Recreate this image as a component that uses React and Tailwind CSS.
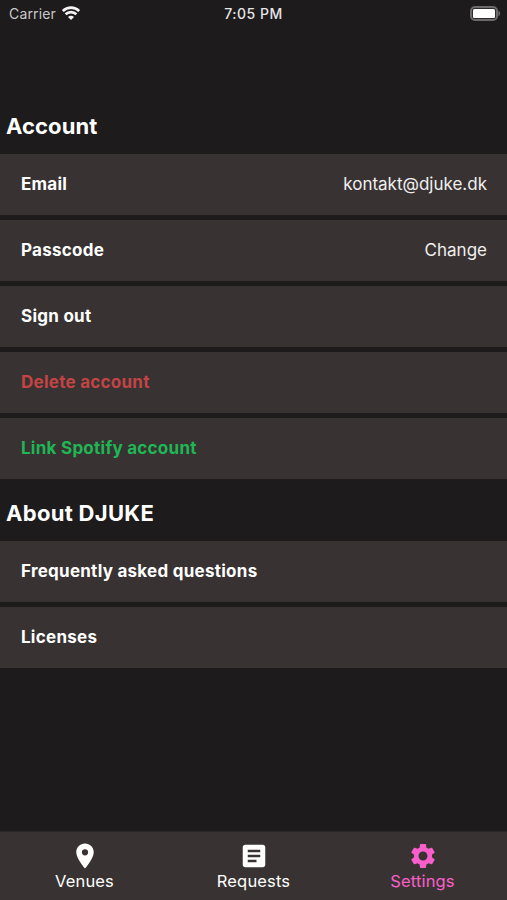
import React from 'react';
import { MdArticle, MdLocationOn, MdSettings } from 'react-icons/md';

const sections = [
  {
    title: 'Account',
    headerClass: 'h-[54px] pb-[3px]',
    titleClass: 'tracking-[0.1px]',
    rows: [
      { label: 'Email', value: 'kontakt@djuke.dk' },
      { label: 'Passcode', value: 'Change' },
      { label: 'Sign out' },
      { label: 'Delete account', color: 'text-[#c24444]' },
      { label: 'Link Spotify account', color: 'text-[#1fb655]' },
    ],
  },
  {
    title: 'About DJUKE',
    headerClass: 'h-[62px] pt-[6px]',
    titleClass: 'tracking-[0.3px]',
    rows: [
      { label: 'Frequently asked questions' },
      { label: 'Licenses' },
    ],
  },
];

const tabs = [
  { name: 'Venues', icon: MdLocationOn },
  { name: 'Requests', icon: MdArticle },
  { name: 'Settings', icon: MdSettings, active: true },
];

function StatusBar() {
  return (
    <div className="grid h-[27px] shrink-0 grid-cols-3 items-center pl-[9px] pr-[6px] text-[14px]">
      <div className="flex items-center gap-[6px] tracking-[0.15px] text-[#c9c8c8]">
        <span>Carrier</span>
        <svg className="-mt-px" width="18" height="14" viewBox="0 0 18 14" fill="none" stroke="#f4f4f4" strokeWidth="2.7">
          <path d="M0.8 5C5.4 0.4 12.6 0.4 17.2 5" />
          <path d="M3.6 8.3C6.6 5.4 11.4 5.4 14.4 8.3" />
          <path d="M9 14L6 10.9C7.7 9.5 10.3 9.5 12 10.9Z" fill="#f4f4f4" stroke="none" />
        </svg>
      </div>
      <div className="pr-[3px] text-center font-medium tracking-[0.5px] text-[#e6e5e5]">7:05 PM</div>
      <svg className="justify-self-end" width="31" height="16" viewBox="0 0 31 16">
        <rect x="1" y="1" width="26" height="13" rx="4" fill="#2c2a2a" stroke="#6c6a6a" strokeWidth="2" />
        <rect x="3" y="3" width="22" height="9" rx="1.5" fill="#ffffff" />
        <path d="M28.4 4.8C30.8 5.9 30.8 9.1 28.4 10.2Z" fill="#6c6a6a" />
      </svg>
    </div>
  );
}

function Section({ title, headerClass, titleClass, rows }) {
  return (
    <section>
      <div className={`flex items-center pl-[6px] ${headerClass}`}>
        <h2 className={`text-[22px] font-bold leading-7 ${titleClass}`}>{title}</h2>
      </div>
      <ul className="flex flex-col gap-[5px]">
        {rows.map((row) => (
          <li key={row.label} className="flex h-[61px] items-center justify-between bg-[#383332] pl-[21px] pr-5 text-[17px]">
            <span className={`font-bold tracking-[0.26px] ${row.color || 'text-white'}`}>{row.label}</span>
            {row.value && <span className="text-[#f0efef]">{row.value}</span>}
          </li>
        ))}
      </ul>
    </section>
  );
}

export default function App() {
  return (
    <div className="flex h-[900px] w-full flex-col overflow-hidden bg-[#1d1b1b] font-['Inter',sans-serif] text-white">
      <StatusBar />
      <main className="flex-1 pt-[73px]">
        {sections.map((section) => (
          <Section key={section.title} {...section} />
        ))}
      </main>
      <nav className="grid h-[69px] shrink-0 grid-cols-3 border-t border-[#2c2827] bg-[#383332]">
        {tabs.map(({ name, icon: Icon, active }) => (
          <a
            key={name}
            href="#"
            className={`flex flex-col items-center pt-[9px] text-[16.5px] leading-5 tracking-[0.15px] ${active ? 'text-[#f85fcb]' : 'text-white'}`}
          >
            <Icon size={30} />
            <span>{name}</span>
          </a>
        ))}
      </nav>
    </div>
  );
}
